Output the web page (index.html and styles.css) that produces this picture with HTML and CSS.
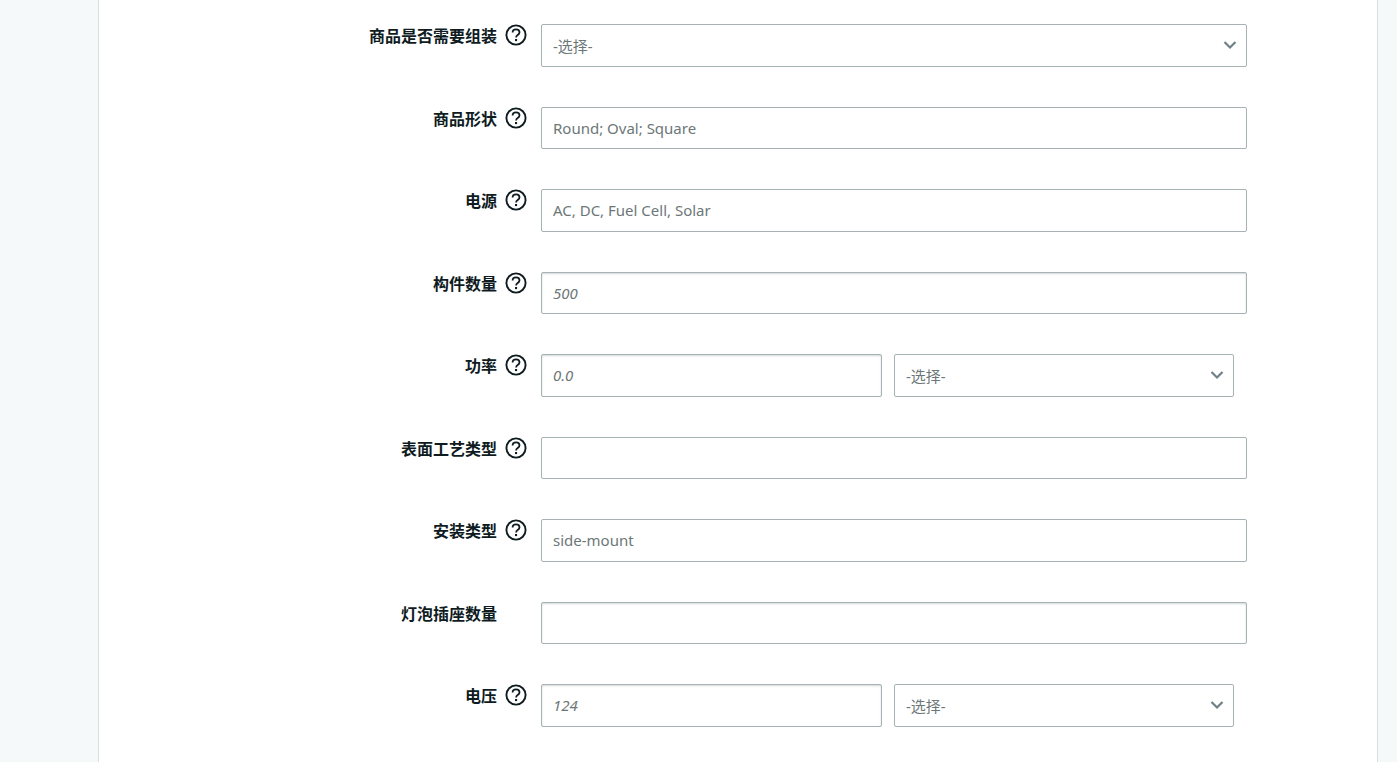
FILE: index.html
```html
<!DOCTYPE html>
<html lang="zh-CN">
<head>
    <meta charset="UTF-8">
    <title>商品属性</title>
    <link rel="stylesheet" href="styles.css">
</head>
<body>
    <svg class="icon-defs" width="0" height="0">
        <symbol id="help" viewBox="0 0 22 22">
            <circle cx="11" cy="11" r="9.6" fill="none" stroke="currentColor" stroke-width="1.9"/>
            <path d="M7.6 8.6c0-2 1.5-3.2 3.5-3.2 2 0 3.4 1.2 3.4 2.9 0 1.4-.8 2.1-1.8 2.8-1 .7-1.6 1.2-1.6 2.5" fill="none" stroke="currentColor" stroke-width="1.8"/>
            <rect x="10" y="15" width="2.1" height="2.1" fill="currentColor"/>
        </symbol>
        <symbol id="chevron" viewBox="0 0 14 10">
            <path d="M1.5 2l5.5 5.5L12.500 2" fill="none" stroke="currentColor" stroke-width="2.200"/>
        </symbol>
    </svg>

    <div class="card">
        <div class="row">
            <label class="row-label">商品是否需要组装</label>
            <svg class="help"><use href="#help"/></svg>
            <div class="select select-full"><span>-选择-</span><svg class="chevron"><use href="#chevron"/></svg></div>
        </div>
        <div class="row">
            <label class="row-label">商品形状</label>
            <svg class="help"><use href="#help"/></svg>
            <input class="field" type="text" placeholder="Round; Oval; Square">
        </div>
        <div class="row">
            <label class="row-label">电源</label>
            <svg class="help"><use href="#help"/></svg>
            <input class="field" type="text" placeholder="AC, DC, Fuel Cell, Solar">
        </div>
        <div class="row">
            <label class="row-label">构件数量</label>
            <svg class="help"><use href="#help"/></svg>
            <input class="field number" type="text" placeholder="500">
        </div>
        <div class="row">
            <label class="row-label">功率</label>
            <svg class="help"><use href="#help"/></svg>
            <div class="split">
                <input class="field number" type="text" placeholder="0.0">
                <div class="select"><span>-选择-</span><svg class="chevron"><use href="#chevron"/></svg></div>
            </div>
        </div>
        <div class="row">
            <label class="row-label">表面工艺类型</label>
            <svg class="help"><use href="#help"/></svg>
            <input class="field" type="text">
        </div>
        <div class="row">
            <label class="row-label">安装类型</label>
            <svg class="help"><use href="#help"/></svg>
            <input class="field" type="text" placeholder="side-mount">
        </div>
        <div class="row">
            <label class="row-label">灯泡插座数量</label>
            <span class="help"></span>
            <input class="field number" type="text">
        </div>
        <div class="row">
            <label class="row-label">电压</label>
            <svg class="help"><use href="#help"/></svg>
            <div class="split">
                <input class="field number" type="text" placeholder="124">
                <div class="select"><span>-选择-</span><svg class="chevron"><use href="#chevron"/></svg></div>
            </div>
        </div>
    </div>
</body>
</html>
```

FILE: styles.css
```css
html, body {
    height: 100%;
}
body {
    margin: 0;
    background-color: #f5f9fa;
    font-family: "Noto Sans", "Noto Sans CJK SC", sans-serif;
    color: #0f1c1f;
    overflow: hidden;
}
.icon-defs {
    position: absolute;
}
.card {
    box-sizing: border-box;
    width: 1280px;
    height: 762px;
    margin-left: 98px;
    padding-top: 24px;
    background-color: #fff;
    border-left: 1px solid #d9dfdf;
    border-right: 1px solid #d9dfdf;
    display: flex;
    flex-direction: column;
    gap: 40px;
}
.row {
    display: flex;
    align-items: flex-start;
    height: 42.5px;
}
.row-label {
    box-sizing: border-box;
    width: 398px;
    text-align: right;
    font-size: 16px;
    font-weight: 700;
    line-height: 22px;
    font-family: "Noto Sans CJK SC", sans-serif;
}
.help {
    display: block;
    flex: none;
    width: 22px;
    height: 22px;
    margin: 0 14px 0 8px;
    color: #0f1c1f;
}
.field, .select {
    box-sizing: border-box;
    height: 100%;
    width: 706px;
    padding: 0 11px;
    border: 1px solid #a6b2b3;
    border-radius: 2px;
    background-color: #fff;
    font-size: 15px;
    color: #6c7778;
    font-family: "Noto Sans", "Noto Sans CJK SC", sans-serif;
}
.field::placeholder {
    color: #6c7778;
    opacity: 1;
}
.number {
    box-shadow: inset 0 1px 2px rgba(15, 28, 31, 0.18);
}
.number::placeholder {
    font-style: italic;
}
.select {
    display: flex;
    align-items: center;
    justify-content: space-between;
    padding-right: 9px;
}
.chevron {
    width: 14px;
    height: 10px;
    color: #6f8187;
}
.split {
    display: flex;
    gap: 12px;
    height: 100%;
}
.split .field {
    width: 341px;
}
.split .select {
    width: 340px;
}
```
